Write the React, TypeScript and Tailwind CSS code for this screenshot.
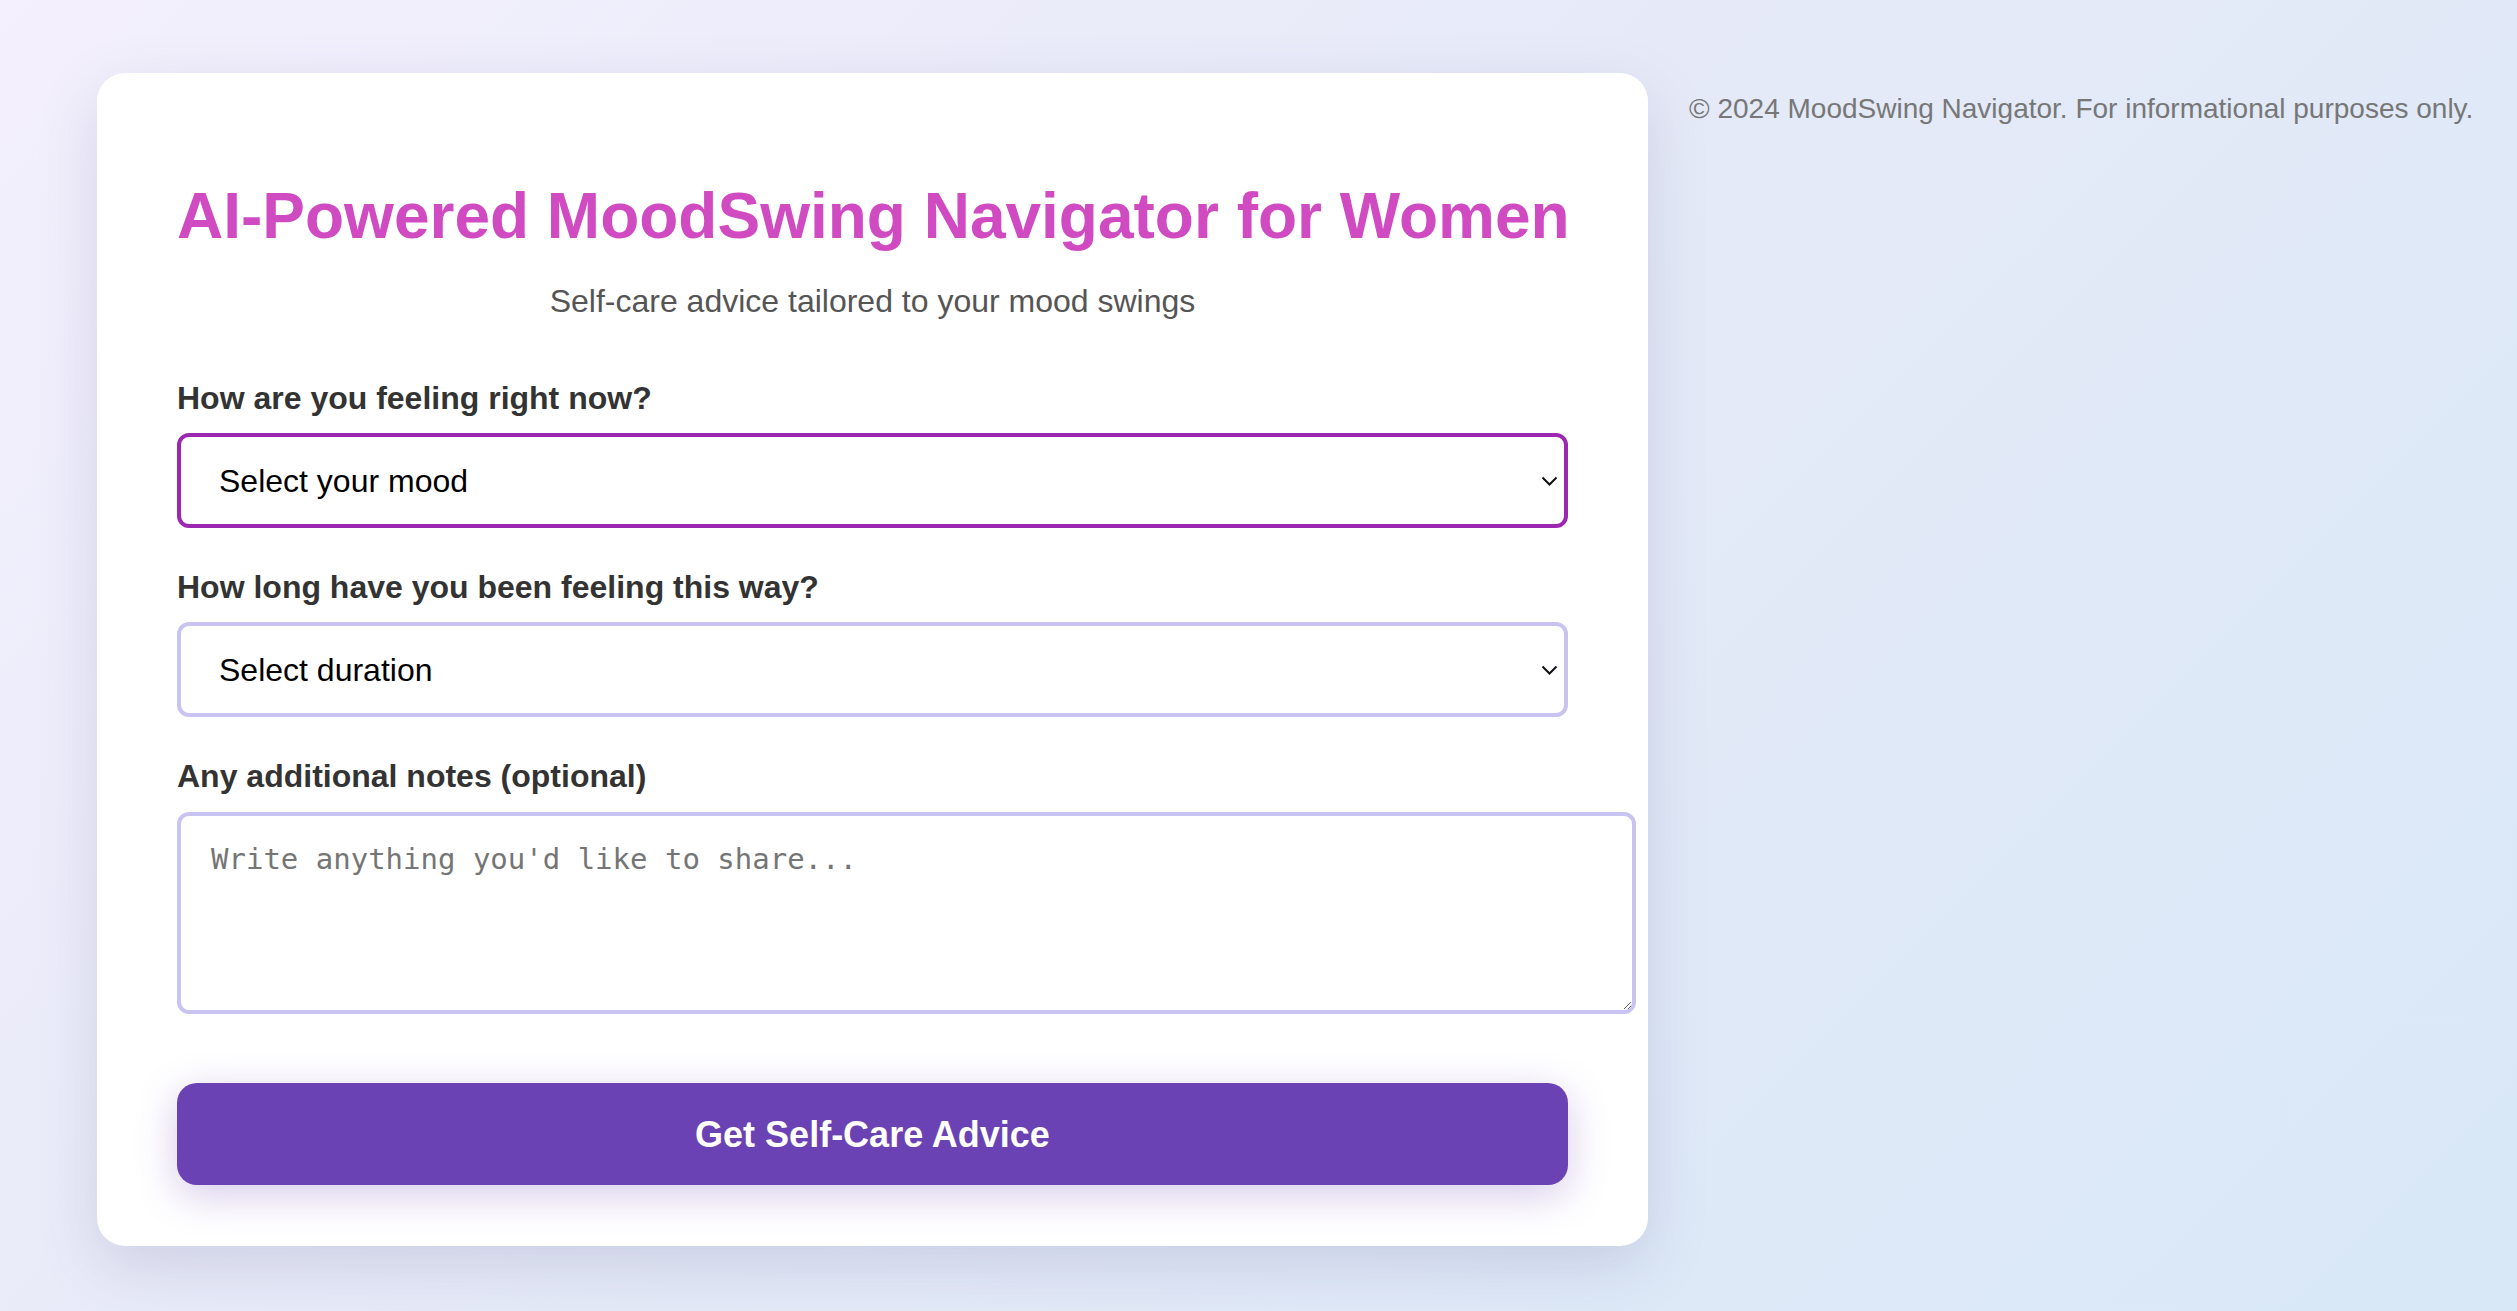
import React from "react";

const Chevron = () => (
  <svg
    className="pointer-events-none absolute right-[10px] top-1/2 -translate-y-1/2"
    width="17"
    height="10"
    viewBox="0 0 17 10"
    fill="none"
  >
    <path d="M1.5 1.5 L8.5 8.5 L15.5 1.5" stroke="#111" strokeWidth="2" />
  </svg>
);

const Field = ({
  label,
  children,
}: {
  label: string;
  children: React.ReactNode;
}) => (
  <div className="mb-[41px]">
    <label className="block text-[32px] leading-[37px] font-bold text-[#333] mb-4">
      {label}
    </label>
    {children}
  </div>
);

export default function App() {
  return (
    <div className="min-h-screen w-full bg-[linear-gradient(135deg,#f4f0fd_0%,#e6eaf8_45%,#d8e8f7_100%)] font-['Liberation_Sans',Arial,sans-serif] flex items-start pl-[97px] pt-[73px] pb-[67px]">
      {/* Card */}
      <div className="w-[1551px] shrink-0 bg-white rounded-[28px] shadow-[0_20px_60px_rgba(90,90,140,0.18)] px-[80px] pt-[106px] pb-[61px]">
        <h1 className="text-center whitespace-nowrap text-[64px] leading-[74px] font-bold text-[#d04bc1]">
          AI-Powered MoodSwing Navigator for Women
        </h1>
        <p className="mt-[30px] mb-[60px] text-center text-[32px] leading-[37px] text-[#555]">
          Self-care advice tailored to your mood swings
        </p>

        <Field label="How are you feeling right now?">
          <div className="relative">
            <select
              defaultValue=""
              className="appearance-none w-full h-[95px] bg-white border-4 border-[#9c27b0] rounded-[12px] pl-[38px] pr-[40px] text-[32px] text-black outline-none"
            >
              <option value="">Select your mood</option>
              <option>Happy</option>
              <option>Anxious</option>
              <option>Sad</option>
              <option>Irritable</option>
              <option>Tired</option>
            </select>
            <Chevron />
          </div>
        </Field>

        <Field label="How long have you been feeling this way?">
          <div className="relative">
            <select
              defaultValue=""
              className="appearance-none w-full h-[95px] bg-white border-4 border-[#c8c3f1] rounded-[12px] pl-[38px] pr-[40px] text-[32px] text-black outline-none"
            >
              <option value="">Select duration</option>
              <option>A few hours</option>
              <option>A day</option>
              <option>A few days</option>
              <option>A week or more</option>
            </select>
            <Chevron />
          </div>
        </Field>

        <div>
          <label className="block text-[32px] leading-[37px] font-bold text-[#333] mb-[17px]">
            Any additional notes (optional)
          </label>
          <textarea
            placeholder="Write anything you'd like to share..."
            className="block w-[1459px] h-[202px] border-4 border-[#c8c3f1] rounded-[12px] pl-[30px] pr-[30px] pt-[26px] font-['DejaVu_Sans_Mono',monospace] text-[29px] leading-[34px] text-black placeholder:text-[#757575] outline-none resize"
          />
        </div>

        <button className="mt-[69px] w-full h-[102px] rounded-[20px] bg-[#6b42b4] text-white text-[36px] leading-[41px] font-bold shadow-[0_10px_40px_rgba(107,66,180,0.28)]">
          Get Self-Care Advice
        </button>
      </div>

      {/* Footer note */}
      <p className="ml-[41px] mt-[20px] whitespace-nowrap text-[28px] leading-[32px] text-[#777]">
        © 2024 MoodSwing Navigator. For informational purposes only.
      </p>
    </div>
  );
}
